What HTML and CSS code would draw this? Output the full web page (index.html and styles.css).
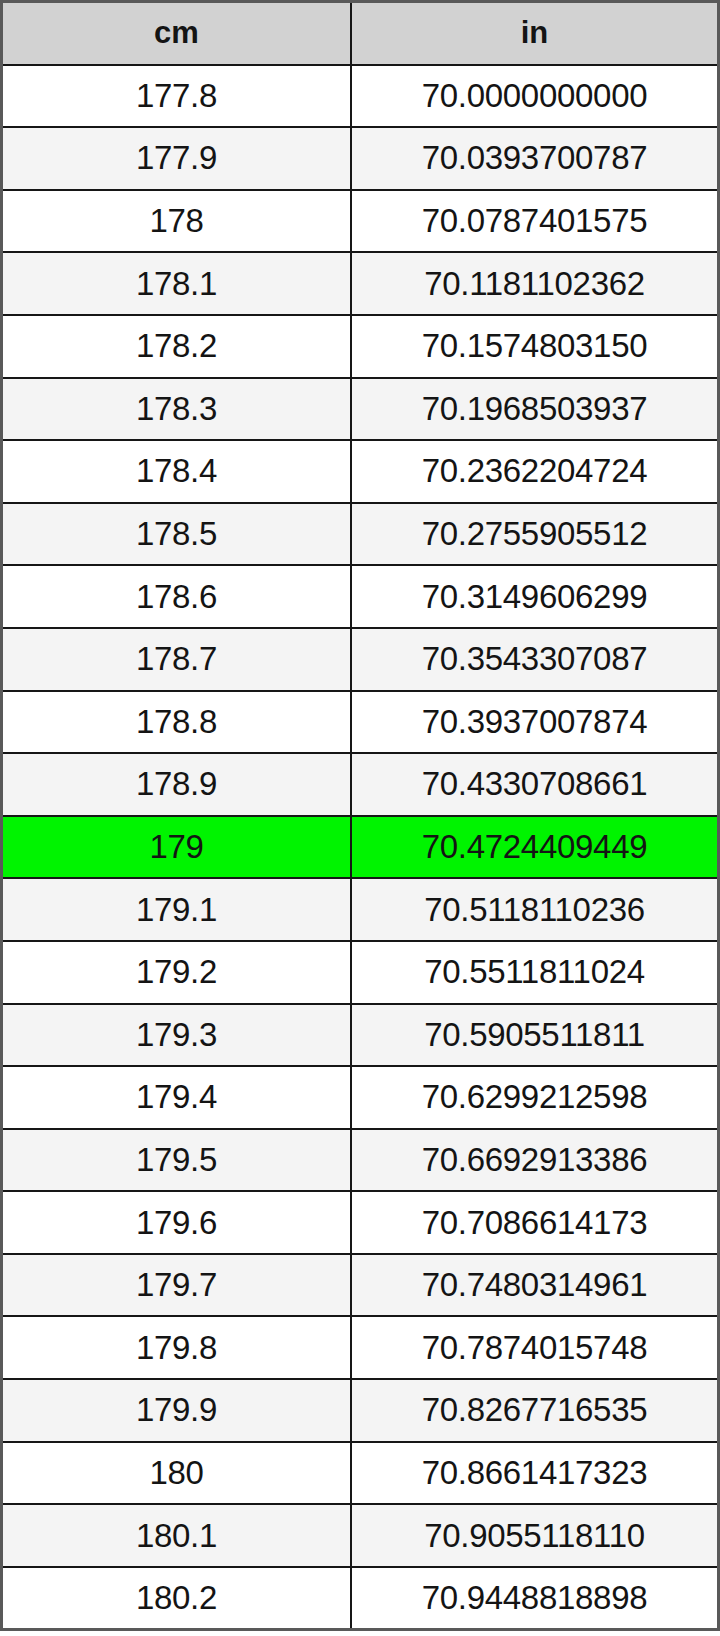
FILE: index.html
```html
<!DOCTYPE html>
<html>
<head>
<meta charset="utf-8">
<link rel="stylesheet" href="styles.css">
</head>
<body>
<div class="table">
  <div class="cell head">cm</div><div class="cell head">in</div>
  <div class="cell">177.8</div><div class="cell">70.0000000000</div>
  <div class="cell alt">177.9</div><div class="cell alt">70.0393700787</div>
  <div class="cell">178</div><div class="cell">70.0787401575</div>
  <div class="cell alt">178.1</div><div class="cell alt">70.1181102362</div>
  <div class="cell">178.2</div><div class="cell">70.1574803150</div>
  <div class="cell alt">178.3</div><div class="cell alt">70.1968503937</div>
  <div class="cell">178.4</div><div class="cell">70.2362204724</div>
  <div class="cell alt">178.5</div><div class="cell alt">70.2755905512</div>
  <div class="cell">178.6</div><div class="cell">70.3149606299</div>
  <div class="cell alt">178.7</div><div class="cell alt">70.3543307087</div>
  <div class="cell">178.8</div><div class="cell">70.3937007874</div>
  <div class="cell alt">178.9</div><div class="cell alt">70.4330708661</div>
  <div class="cell hl">179</div><div class="cell hl">70.4724409449</div>
  <div class="cell alt">179.1</div><div class="cell alt">70.5118110236</div>
  <div class="cell">179.2</div><div class="cell">70.5511811024</div>
  <div class="cell alt">179.3</div><div class="cell alt">70.5905511811</div>
  <div class="cell">179.4</div><div class="cell">70.6299212598</div>
  <div class="cell alt">179.5</div><div class="cell alt">70.6692913386</div>
  <div class="cell">179.6</div><div class="cell">70.7086614173</div>
  <div class="cell alt">179.7</div><div class="cell alt">70.7480314961</div>
  <div class="cell">179.8</div><div class="cell">70.7874015748</div>
  <div class="cell alt">179.9</div><div class="cell alt">70.8267716535</div>
  <div class="cell">180</div><div class="cell">70.8661417323</div>
  <div class="cell alt">180.1</div><div class="cell alt">70.9055118110</div>
  <div class="cell">180.2</div><div class="cell">70.9448818898</div>
</div>
</body>
</html>
```
FILE: styles.css
```css
html, body {
  margin: 0;
  padding: 0;
  background: #ffffff;
}
.table {
  width: 720px;
  box-sizing: border-box;
  border: 3px solid #595959;
  background: #161616;
  display: grid;
  grid-template-columns: 347px 1fr;
  grid-auto-rows: 60.6px;
  gap: 2px;
  font-family: "Liberation Sans", Arial, sans-serif;
  font-size: 33px;
  color: #141414;
}
.cell {
  background: #ffffff;
  display: flex;
  align-items: center;
  justify-content: center;
  letter-spacing: -0.3px;
}
.cell.alt {
  background: #f4f4f4;
}
.cell.head {
  background: #d2d2d2;
  font-weight: bold;
  font-size: 31px;
  letter-spacing: 0;
}
.cell.hl {
  background: #00f400;
}
```
